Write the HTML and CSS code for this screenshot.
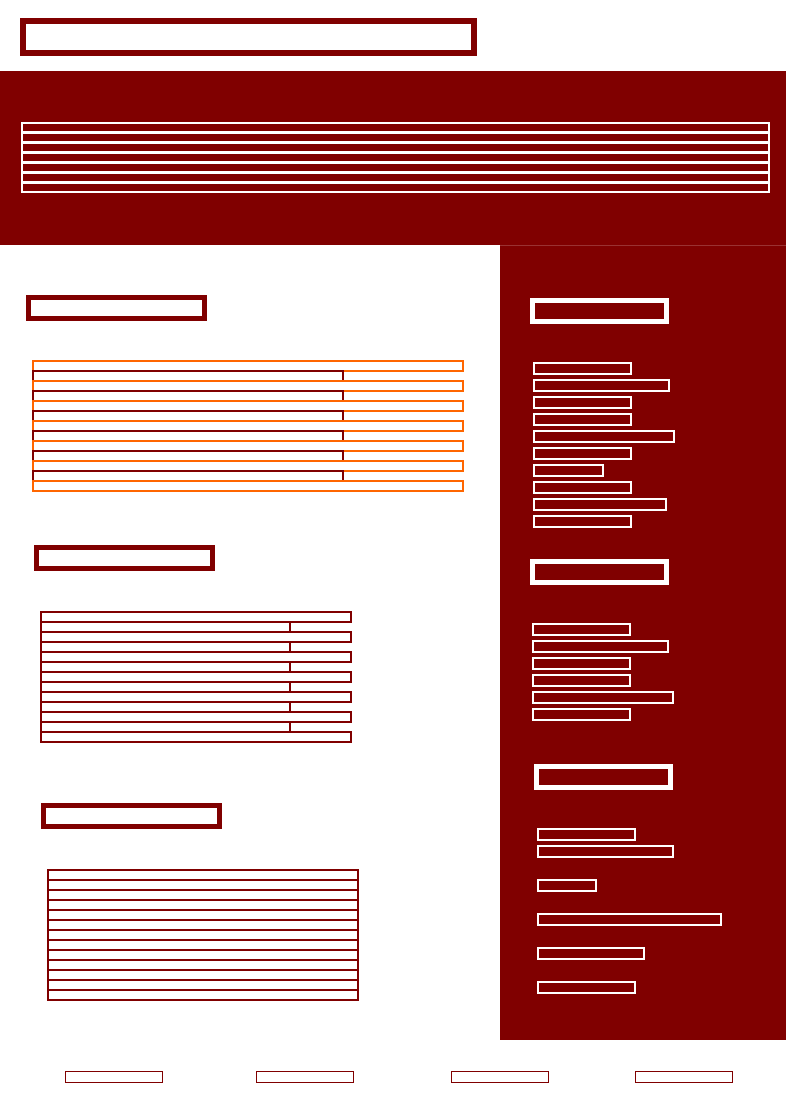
FILE: index.html
```html
<!DOCTYPE html>
<html lang="en">
<head>
<meta charset="utf-8">
<meta name="viewport" content="width=device-width, initial-scale=1">
<link rel="stylesheet" href="styles.css">
</head>
<body>
<header class="masthead"><div class="masthead-title"></div></header>

<section class="banner">
  <ul class="banner-lines">
    <li></li><li></li><li></li><li></li><li></li><li></li><li></li>
  </ul>
</section>

<div class="columns">
  <main class="content">
    <section class="article article-first">
      <div class="heading"></div>
      <ul class="stack">
        <li class="accent"></li><li></li><li class="accent"></li><li></li><li class="accent"></li><li></li><li class="accent"></li><li></li><li class="accent"></li><li></li><li class="accent"></li><li></li><li class="accent"></li>
      </ul>
    </section>
    <section class="article article-second">
      <div class="heading"></div>
      <ul class="stack">
        <li></li><li class="short"></li><li></li><li class="short"></li><li></li><li class="short"></li><li></li><li class="short"></li><li></li><li class="short"></li><li></li><li class="short"></li><li></li>
      </ul>
    </section>
    <section class="article article-third">
      <div class="heading"></div>
      <ul class="stack">
        <li></li><li></li><li></li><li></li><li></li><li></li><li></li><li></li><li></li><li></li><li></li><li></li><li></li>
      </ul>
    </section>
  </main>

  <aside class="sidebar">
    <section class="panel panel-first">
      <div class="heading heading-light"></div>
      <ul class="lines">
        <li></li><li class="w-long"></li><li></li><li></li><li class="w-longer"></li><li></li><li class="w-small"></li><li></li><li class="w-medium"></li><li></li>
      </ul>
    </section>
    <section class="panel panel-second">
      <div class="heading heading-light"></div>
      <ul class="lines">
        <li></li><li class="w-long"></li><li></li><li></li><li class="w-longer"></li><li></li>
      </ul>
    </section>
    <section class="panel panel-third">
      <div class="heading heading-light"></div>
      <ul class="lines">
        <li></li><li class="w-long"></li><li class="spaced w-tiny"></li><li class="spaced w-full"></li><li class="spaced w-email"></li><li class="spaced"></li>
      </ul>
    </section>
  </aside>
</div>

<footer class="footer">
  <div class="footer-item"></div><div class="footer-item"></div><div class="footer-item"></div><div class="footer-item"></div>
</footer>
</body>
</html>
```

FILE: styles.css
```css
:root {
  --maroon: #800000;
  --orange: #ff6600;
}

* {
  box-sizing: border-box;
}

body {
  margin: 0;
  background: #fff;
  font-family: "Liberation Sans", Arial, sans-serif;
}

ul {
  margin: 0;
  padding: 0;
  list-style: none;
}

.masthead {
  padding: 18px 20px 15px;
}

.masthead-title {
  width: 457px;
  max-width: 100%;
  height: 38px;
  border: 6px solid var(--maroon);
}

.banner {
  padding: 51px 16px 52px 21px;
  background: var(--maroon);
}

.banner-lines li {
  height: 11px;
  border: 2px solid #fff;
}

.banner-lines li + li {
  margin-top: -1px;
}

.columns {
  display: grid;
  grid-template-columns: 500fr 286fr;
}

.content {
  padding-top: 50px;
}

.heading {
  width: 181px;
  height: 26px;
  border: 5px solid var(--maroon);
}

.heading-light {
  width: 139px;
  border-color: #fff;
}

.article {
  display: grid;
  gap: 40px;
}

.article-first {
  gap: 39px;
  padding-left: 26px;
}

.article-second {
  padding: 53px 0 0 34px;
}

.article-third {
  padding: 60px 0 0 41px;
}

.stack {
  padding-left: 6px;
}

.stack li {
  width: 312px;
  max-width: 100%;
  height: 12px;
  border: 2px solid var(--maroon);
}

.stack li + li {
  margin-top: -2px;
}

.stack .short {
  width: 251px;
}

.stack .accent {
  width: 432px;
  border-color: var(--orange);
}

.sidebar {
  padding: 52px 0 46px;
  border-top: 1px solid #9a3232;
  background: var(--maroon);
}

.panel {
  display: grid;
  gap: 38px;
}

.panel-first {
  padding-left: 30px;
}

.panel-second {
  padding: 31px 0 0 30px;
}

.panel-third {
  padding: 43px 0 0 34px;
}

.lines {
  display: grid;
  gap: 4px;
  padding-left: 3px;
}

.panel-second .lines {
  padding-left: 2px;
}

.lines li {
  width: 99px;
  height: 13px;
  border: 2px solid #fff;
}

.lines .spaced {
  margin-top: 17px;
}

.lines .w-tiny {
  width: 60px;
}

.lines .w-small {
  width: 71px;
}

.lines .w-email {
  width: 108px;
}

.lines .w-medium {
  width: 134px;
}

.lines .w-long {
  width: 137px;
}

.lines .w-longer {
  width: 142px;
}

.lines .w-full {
  width: 185px;
}

.footer {
  display: grid;
  grid-template-columns: 191fr 195fr 184fr 98px;
  padding: 31px 53px 29px 65px;
}

.footer-item {
  width: 98px;
  height: 12px;
  border: 1px solid var(--maroon);
}
```
